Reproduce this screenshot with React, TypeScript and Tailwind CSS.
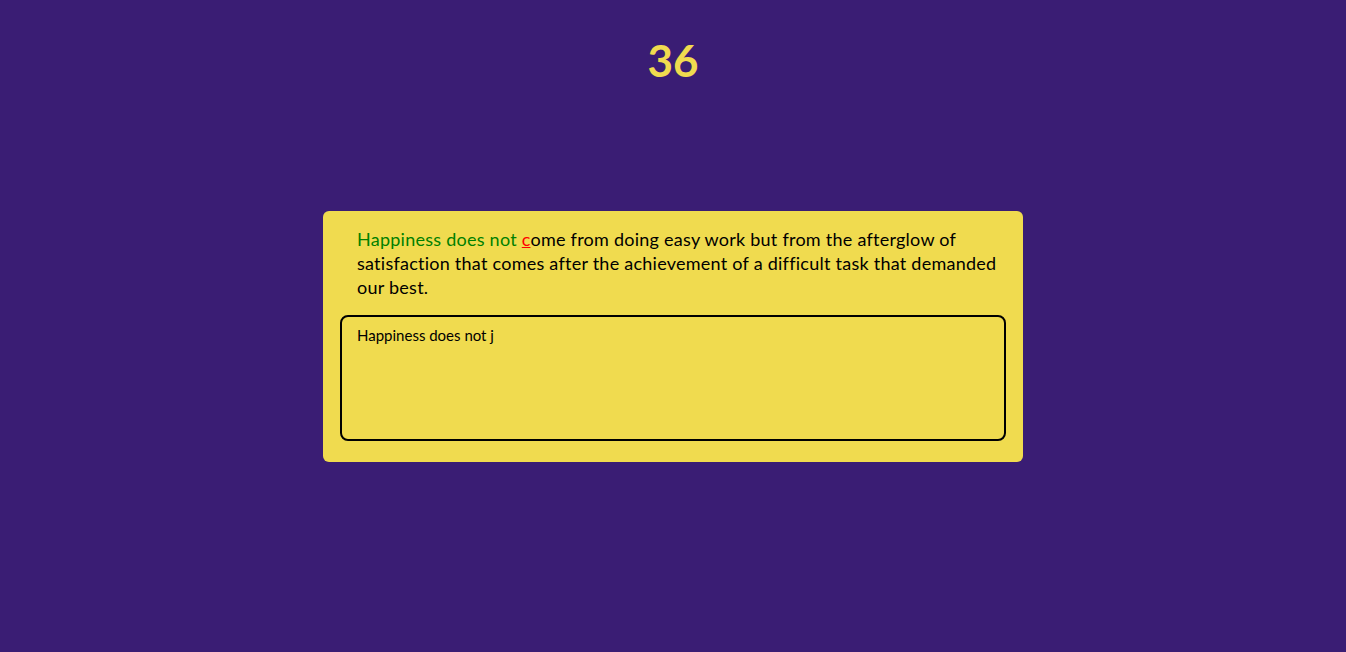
export default function App() {
  return (
    <div className="min-h-[652px] w-full bg-[#3a1d74]" style={{ fontFamily: "Lato, 'Noto Sans', sans-serif" }}>
      <div className="flex flex-col items-center">
        <div className="mt-[34px] h-[52px] text-[44px] font-bold leading-[52px] text-[#f0db4f]">36</div>
        <div className="mt-[125px] w-[700px] rounded-md bg-[#f0db4f] px-[17px] pb-[21px] pt-[16px]">
          <p className="pl-[17px] pr-0 text-[18px] leading-[24px] tracking-[0.25px] text-black">
            <span className="text-[#008000]">Happiness does not </span>
            <span className="text-[#ff0000] underline">c</span>
            ome from doing easy work but from the afterglow of satisfaction that comes after the achievement of a difficult task that demanded our best.
          </p>
          <textarea
            className="mt-[16px] block h-[126px] w-full resize-none rounded-lg border-2 border-black bg-transparent px-[15px] py-[8px] text-[15px] leading-[20px] text-black outline-none"
            style={{ fontFamily: "Lato, 'Noto Sans', sans-serif" }}
            defaultValue="Happiness does not j"
          />
        </div>
      </div>
    </div>
  );
}
